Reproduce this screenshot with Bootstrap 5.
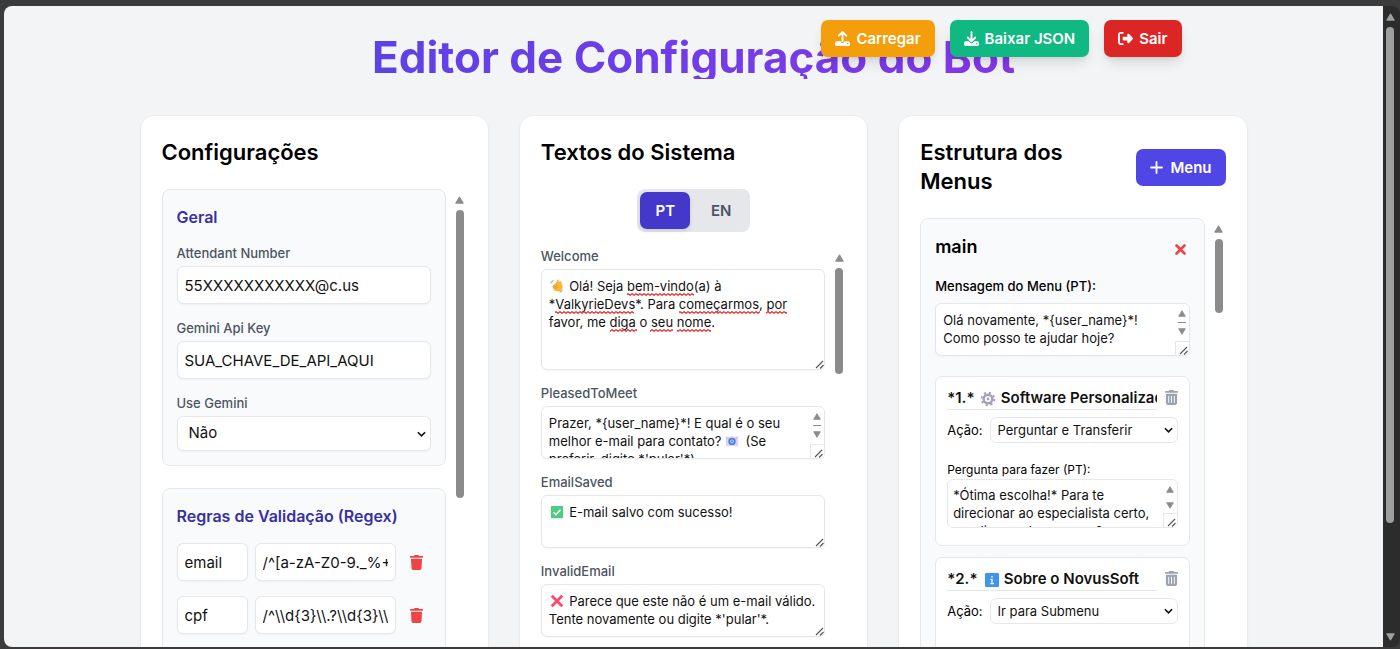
<!DOCTYPE html>
<html lang="pt-BR">
<head>
<meta charset="utf-8">
<meta name="viewport" content="width=device-width, initial-scale=1">
<title>Editor de Configuração do Bot</title>
<link href="https://cdn.jsdelivr.net/npm/bootstrap@5.3.0/dist/css/bootstrap.min.css" rel="stylesheet">
<style>
  body { font-family: Inter, "Liberation Sans", sans-serif; font-size: 13px; line-height: 18px; color: #000; background: #3b3b3b; }
  .shell { height: 100vh; padding: 6px 0 2px 4px; }
  .page { background: #f3f4f6; border-radius: 8px 0 0 8px; overflow: hidden; padding: 0 20px; }
  .wrap { max-width: 1108px; margin: 0 auto; }
  .page-title { font-size: 44px; line-height: 44px; font-weight: 700; margin: 0; padding: 0; background: linear-gradient(to right, #4f46e5, #9333ea); -webkit-background-clip: text; background-clip: text; color: transparent; }
  .hero { padding: 29px 0 36px; }
  .actions { top: 14px; right: 66px; gap: 15px; }
  .app-btn { font-size: 15px; line-height: 23px; font-weight: 600; color: #fff; border: 0; border-radius: 7px; padding: 7px 14px; display: inline-flex; align-items: center; gap: 7px; white-space: nowrap; }
  .app-btn:hover { color: #fff; filter: brightness(.95); }
  .actions .app-btn { gap: 6px; box-shadow: 0 8px 14px -3px rgba(0,0,0,.12), 0 3px 6px -3px rgba(0,0,0,.12); }
  .c-load { background: #f59e0b; } .c-save { background: #10b981; } .c-exit { background: #dc2626; } .c-menu { background: #4f46e5; }
  .cols { display: grid; grid-template-columns: repeat(3, minmax(0, 1fr)); gap: 30px; }
  .pane { background: #fff; border: 1px solid #e9ebee; border-radius: 14px; padding: 22px 21px; min-height: 600px; box-shadow: 0 1px 2px rgba(0,0,0,.03); }
  .pane-title { font-size: 22px; line-height: 29px; font-weight: 600; margin: 0; }
  .pane-head { margin-bottom: 22px; }
  .scroller { display: flex; gap: 7px; }
  .scroller > .body-col { flex: 1; min-width: 0; }
  .group-box { background: #f9fafb; border: 1px solid #e5e7eb; border-radius: 8px; padding: 14px; margin-bottom: 22px; }
  .group-title { font-size: 16px; line-height: 27px; font-weight: 600; color: #3730a3; margin: 0 0 13px; }
  .field { margin-bottom: 14px; }
  .group-box .field { margin-bottom: 15px; }
  .group-box .field:last-child { margin-bottom: 0; }
  .field > label { display: block; font-weight: 500; color: #4b5563; margin-bottom: 4px; }
  .form-control, .form-select { border: 1px solid #e5e7eb; border-radius: 6px; color: #111; background-color: #fff; box-shadow: 0 1px 2px rgba(0,0,0,.04); }
  input.form-control { height: 38px; font-size: 15px; line-height: 22px; padding: 7px; }
  .form-select { height: 35px; font-size: 15px; line-height: 22px; padding: 5px 20px 7px 11px; background-image: url("data:image/svg+xml,%3Csvg xmlns='http://www.w3.org/2000/svg' viewBox='0 0 10 6'%3E%3Cpath d='M1 1l4 4 4-4' fill='none' stroke='%23111' stroke-width='1.8'/%3E%3C/svg%3E"); background-size: 9px 6px; background-position: right 4px center; }
  textarea.form-control { font-size: 13px; line-height: 18px; padding: 7px; height: 53px; min-height: 0; resize: none; overflow: hidden; display: block; }
  textarea.tall { height: 101px; }
  .rule { display: grid; grid-template-columns: 71px minmax(0,1fr) 28px; gap: 7px; margin-bottom: 15px; }
  .icon-btn { border: 0; background: none; padding: 0; color: #ef4444; display: inline-flex; align-items: center; justify-content: center; }
  /* scrollbars */
  .sbar { width: 14px; display: flex; flex-direction: column; align-items: center; padding-top: 7px; gap: 6px; color: #8b8b8b; }
  .sbar svg { display: block; width: 9px; height: 8px; flex: none; }
  .thumb { width: 8px; border-radius: 4px; background: #8b8b8b; }
  .t-config { height: 288px; } .t-text { height: 106px; } .t-menu { height: 74px; }
  .win-bar { width: 17px; background: #2c2c2c; color: #9f9f9f; padding: 7px 3px 6px 0; border-radius: 0 8px 8px 0; display: flex; flex-direction: column; align-items: center; gap: 6px; }
  .win-bar .thumb { height: 79%; background: #9f9f9f; }
  .win-bar svg { width: 9px; height: 8px; flex: none; }
  .box-wrap { position: relative; }
  .grip { position: absolute; right: 1px; bottom: 1px; width: 9px; height: 9px; pointer-events: none; }
  .mini-bar { position: absolute; right: 1px; top: 1px; bottom: 1px; width: 14px; background: #fff; color: #8b8b8b; display: flex; flex-direction: column; align-items: center; gap: 5px; padding-top: 6px; border-radius: 0 6px 6px 0; pointer-events: none; }
  .mini-bar svg { width: 8px; height: 7px; flex: none; }
  .mini-bar i { width: 8px; height: 1px; background: #8b8b8b; }
  .corner { position: absolute; right: 0; bottom: 0; width: 14px; height: 14px; border: 1px solid #e5e7eb; border-width: 1px 0 0 1px; }
  .mini-bar .grip { right: 1px; bottom: 0; width: 9px; height: 9px; }
  .emoji { position: absolute; pointer-events: none; width: 14px; height: 14px; left: 9px; top: 10px; }
  .emoji.on-line2 { left: 184px; top: 28px; }
  .squiggles { position: absolute; left: 0; top: 0; width: 100%; height: 100%; pointer-events: none; }
  /* language switch */
  .lang-row { margin-bottom: 15px; }
  .lang { background: #e5e7eb; border-radius: 8px; padding: 3px; display: inline-flex; gap: 6px; }
  .lang button { border: 0; background: none; border-radius: 7px; font-size: 15px; line-height: 23px; font-weight: 600; padding: 7px 15px; color: #4b5563; }
  .lang button.on { background: #4338ca; color: #fff; box-shadow: 0 2px 4px rgba(0,0,0,.12); }
  /* menus */
  .menu-name { font-size: 18px; line-height: 28px; font-weight: 600; margin: 0; }
  .menu-top .icon-btn { padding-top: 4px; }
  .msg-label { display: block; font-weight: 500; margin: 16px 0 8px; }
  .msg-box { margin-bottom: 20px; }
  .option { background: #fff; border: 1px solid #e5e7eb; border-radius: 7px; padding: 7px 11px 17px; margin-bottom: 11px; }
  input.opt-title { border: 0; border-bottom: 1px solid #e5e7eb; border-radius: 0; box-shadow: none; padding: 3px 0 1px; height: 26px; font-weight: 600; }
  .opt-title-row .icon-btn { color: #9ca3af; width: 13px; }
  .opt-title-row .emoji { left: 33px; top: 7px; width: 16px; height: 16px; }
  .opt-title-row .emoji.info { left: 37px; }
  .action-row { gap: 7px; margin: 7px 0 18px; }
  .action-row .form-select { height: 26px; font-size: 13px; line-height: 18px; padding: 3px 20px 3px 7px; box-shadow: none; }
  .q-label { display: block; font-size: 12px; line-height: 18px; }
  textarea.short { height: 49px; padding: 6px 5px; box-shadow: none; }
</style>
</head>
<body>
<svg width="0" height="0" class="position-absolute" aria-hidden="true">
  <defs>
    <symbol id="up" viewBox="0 0 9 8"><path d="M4.500 .8 8.300 7.200H.7z" fill="currentColor" stroke="currentColor" stroke-linejoin="round"/></symbol>
    <symbol id="down" viewBox="0 0 9 8"><path d="M4.500 7.200 8.300 .8H.7z" fill="currentColor" stroke="currentColor" stroke-linejoin="round"/></symbol>
    <symbol id="resize" viewBox="0 0 9 9"><path d="M1 8 8 1M5 8.500 8.500 5" stroke="#555" stroke-width="1.100" fill="none"/></symbol>
    <symbol id="trash" viewBox="0 0 448 512"><path fill="currentColor" d="M432 32H312l-9.4-18.7A24 24 0 0 0 281.100 0H166.800a23.720 23.720 0 0 0-21.400 13.300L136 32H16A16 16 0 0 0 0 48v32a16 16 0 0 0 16 16h416a16 16 0 0 0 16-16V48a16 16 0 0 0-16-16zM53.200 467a48 48 0 0 0 47.900 45h245.800a48 48 0 0 0 47.900-45L416 128H32z"/></symbol>
    <symbol id="trash-can" viewBox="0 0 448 512"><path fill="currentColor" d="M135.2 17.7C140.6 6.8 151.7 0 163.8 0H284.2c12.1 0 23.2 6.8 28.6 17.7L320 32h96c17.7 0 32 14.3 32 32s-14.3 32-32 32H32C14.3 96 0 81.7 0 64S14.3 32 32 32h96l7.2-14.3zM32 128H416V448c0 35.3-28.7 64-64 64H96c-35.3 0-64-28.7-64-64V128zm96 64c-8.8 0-16 7.2-16 16V432c0 8.8 7.2 16 16 16s16-7.2 16-16V208c0-8.8-7.2-16-16-16zm96 0c-8.8 0-16 7.2-16 16V432c0 8.8 7.2 16 16 16s16-7.2 16-16V208c0-8.8-7.2-16-16-16zm96 0c-8.8 0-16 7.2-16 16V432c0 8.8 7.2 16 16 16s16-7.2 16-16V208c0-8.8-7.2-16-16-16z"/></symbol>
    <pattern id="wave" width="4" height="3" patternUnits="userSpaceOnUse"><path d="M-1 0 1 2.200 3 .4 5 2.200" transform="translate(0 .2)" fill="none" stroke="#e22" stroke-width="1.100"/></pattern>
  </defs>
</svg>
<div class="shell d-flex">
  <main class="page flex-grow-1">
    <div class="wrap position-relative">
      <header class="hero text-center">
        <h1 class="page-title">Editor de Configuração do Bot</h1>
        <div class="actions position-absolute d-flex">
          <button type="button" class="btn app-btn c-load"><svg width="15" height="15" viewBox="0 0 512 512" fill="currentColor" aria-hidden="true"><path d="M288 109.3V352c0 17.7-14.3 32-32 32s-32-14.3-32-32V109.3l-73.4 73.4c-12.5 12.5-32.8 12.5-45.3 0s-12.5-32.8 0-45.3l128-128c12.5-12.5 32.8-12.5 45.3 0l128 128c12.5 12.5 12.5 32.8 0 45.3s-32.8 12.5-45.3 0L288 109.3zM64 352H192c0 35.3 28.7 64 64 64s64-28.7 64-64H448c35.3 0 64 28.7 64 64v32c0 35.3-28.7 64-64 64H64c-35.3 0-64-28.7-64-64V416c0-35.3 28.7-64 64-64zM432 456a24 24 0 1 0 0-48 24 24 0 1 0 0 48z"/></svg>Carregar</button>
          <button type="button" class="btn app-btn c-save"><svg width="15" height="15" viewBox="0 0 512 512" fill="currentColor" aria-hidden="true"><path d="M288 32c0-17.7-14.3-32-32-32s-32 14.3-32 32V274.7l-73.4-73.4c-12.5-12.5-32.8-12.5-45.3 0s-12.5 32.8 0 45.3l128 128c12.5 12.5 32.8 12.5 45.3 0l128-128c12.5-12.5 12.5-32.8 0-45.3s-32.8-12.5-45.3 0L288 274.7V32zM64 352c-35.3 0-64 28.7-64 64v32c0 35.3 28.7 64 64 64H448c35.3 0 64-28.7 64-64V416c0-35.3-28.7-64-64-64H346.5l-45.3 45.3c-25 25-65.5 25-90.5 0L165.5 352H64zm368 56a24 24 0 1 1 0 48 24 24 0 1 1 0-48z"/></svg>Baixar JSON</button>
          <button type="button" class="btn app-btn c-exit"><svg width="15" height="15" viewBox="0 0 512 512" fill="currentColor" aria-hidden="true"><path d="M377.9 105.9L500.7 228.7c7.2 7.2 11.3 17.1 11.3 27.3s-4.1 20.1-11.3 27.3L377.9 406.1c-6.4 6.4-15 9.9-24 9.900c-18.7 0-33.900-15.200-33.900-33.900l0-62.100-128 0c-17.700 0-32-14.300-32-32l0-64c0-17.700 14.300-32 32-32l128 0 0-62.100c0-18.700 15.200-33.900 33.900-33.900c9 0 17.600 3.600 24 9.900zM160 96L96 96c-17.700 0-32 14.300-32 32l0 256c0 17.700 14.300 32 32 32l64 0c17.700 0 32 14.300 32 32s-14.300 32-32 32l-64 0c-53 0-96-43-96-96L0 128C0 75 43 32 96 32l64 0c17.700 0 32 14.300 32 32s-14.300 32-32 32z"/></svg>Sair</button>
        </div>
      </header>

      <div class="cols">
        <section class="pane">
          <div class="pane-head"><h2 class="pane-title">Configurações</h2></div>
          <div class="scroller">
            <div class="body-col">
              <div class="group-box">
                <h3 class="group-title">Geral</h3>
                <div class="field"><label for="attendant">Attendant Number</label><input id="attendant" type="text" class="form-control" value="55XXXXXXXXXXX@c.us"></div>
                <div class="field"><label for="apikey">Gemini Api Key</label><input id="apikey" type="text" class="form-control" value="SUA_CHAVE_DE_API_AQUI"></div>
                <div class="field"><label for="gemini">Use Gemini</label><select id="gemini" class="form-select"><option>Não</option><option>Sim</option></select></div>
              </div>
              <div class="group-box">
                <h3 class="group-title">Regras de Validação (Regex)</h3>
                <div class="rule"><input type="text" class="form-control" aria-label="Nome da regra" value="email"><input type="text" class="form-control" aria-label="Regex email" value="/^[a-zA-Z0-9._%+"><button type="button" class="icon-btn" aria-label="Remover email"><svg width="13" height="15"><use href="#trash"/></svg></button></div>
                <div class="rule"><input type="text" class="form-control" aria-label="Nome da regra" value="cpf"><input type="text" class="form-control" aria-label="Regex cpf" value="/^\\d{3}\\.?\\d{3}\\"><button type="button" class="icon-btn" aria-label="Remover cpf"><svg width="13" height="15"><use href="#trash"/></svg></button></div>
              </div>
            </div>
            <div class="sbar" aria-hidden="true"><svg><use href="#up"/></svg><div class="thumb t-config"></div></div>
          </div>
        </section>

        <section class="pane">
          <div class="pane-head"><h2 class="pane-title">Textos do Sistema</h2></div>
          <div class="lang-row d-flex justify-content-center"><div class="lang"><button type="button" class="on">PT</button><button type="button">EN</button></div></div>
          <div class="scroller">
            <div class="body-col">
              <div class="field"><label for="welcome">Welcome</label>
                <div class="box-wrap"><textarea id="welcome" class="form-control tall" spellcheck="false">&emsp;&nbsp; Olá! Seja bem-vindo(a) à
*ValkyrieDevs*. Para começarmos, por favor, me diga o seu nome.</textarea>
                  <svg class="emoji" viewBox="0 0 16 16" aria-hidden="true"><path d="M1 4.500 3.500 2M11.500 15l2.500-2" stroke="#7fb4d8" stroke-width="1.300" fill="none" stroke-linecap="round"/><path d="M3 8.500 7 5l1-3.500c.5-1.500 2-1 2 .2l-.3 1.800 1.700-1c1-.5 1.700.3 1.500 1.200l.7 2.300c1.500 3 .8 8-3.600 8.200C6 14.500 3.500 11 3 8.500z" fill="#fbb733"/><path d="M3 8.500 7.500 4.500M3.800 10.500 8 7M5 12.500 9 9" stroke="#e08b1d" stroke-width=".9"/></svg>
                  <svg class="squiggles" aria-hidden="true"><g fill="url(#wave)"><rect x="86" y="24" width="67" height="3"/><rect x="14" y="42" width="79" height="3"/><rect x="138" y="42" width="81" height="3"/><rect x="225" y="42" width="21" height="3"/><rect x="69" y="60" width="27" height="3"/><rect x="109" y="60" width="23" height="3"/><rect x="136" y="60" width="34" height="3"/></g></svg>
                  <svg class="grip"><use href="#resize"/></svg></div></div>
              <div class="field"><label for="pleased">PleasedToMeet</label>
                <div class="box-wrap"><textarea id="pleased" class="form-control" spellcheck="false">Prazer, *{user_name}*! E qual é o seu
melhor e-mail para contato? &emsp;&nbsp; (Se
preferir, digite *'pular'*)</textarea>
                  <svg class="emoji on-line2" viewBox="0 0 16 16" aria-hidden="true"><rect x="1" y="3" width="14" height="11" fill="#d9d5ee"/><path d="M1 3l5 5M15 3l-5 5" stroke="#e6a9cd"/><circle cx="8" cy="8.500" r="4.200" fill="#4c7fe0"/><circle cx="8" cy="8.500" r="1.700" fill="none" stroke="#cfe0ff"/></svg>
                  <div class="mini-bar"><svg><use href="#up"/></svg><i></i><svg><use href="#down"/></svg><div class="corner"><svg class="grip"><use href="#resize"/></svg></div></div></div></div>
              <div class="field"><label for="saved">EmailSaved</label>
                <div class="box-wrap"><textarea id="saved" class="form-control" spellcheck="false">&emsp;&nbsp; E-mail salvo com sucesso!</textarea>
                  <svg class="emoji" viewBox="0 0 16 16" aria-hidden="true"><rect x="1" y="1" width="14" height="14" rx="1" fill="#4fcb83"/><path d="M4 8.200l2.800 2.800L12 5.500" stroke="#fff" stroke-width="1.600" fill="none"/></svg>
                  <svg class="grip"><use href="#resize"/></svg></div></div>
              <div class="field"><label for="invalid">InvalidEmail</label>
                <div class="box-wrap"><textarea id="invalid" class="form-control" spellcheck="false">&emsp;&nbsp; Parece que este não é um e-mail válido. Tente novamente ou digite *'pular'*.</textarea>
                  <svg class="emoji" viewBox="0 0 16 16" aria-hidden="true"><path d="M2 2l12 12M14 2 2 14" stroke="#f8486b" stroke-width="3.200"/></svg>
                  <svg class="grip"><use href="#resize"/></svg></div></div>
            </div>
            <div class="sbar" aria-hidden="true"><svg><use href="#up"/></svg><div class="thumb t-text"></div></div>
          </div>
        </section>

        <section class="pane">
          <div class="pane-head d-flex justify-content-between align-items-center"><h2 class="pane-title">Estrutura dos Menus</h2>
            <button type="button" class="btn app-btn c-menu"><svg width="13" height="13" viewBox="0 0 13 13" aria-hidden="true"><path d="M6.500 1v11M1 6.500h11" stroke="#fff" stroke-width="1.800" stroke-linecap="round"/></svg>Menu</button></div>
          <div class="scroller">
            <div class="body-col">
              <div class="group-box">
                <div class="menu-top d-flex justify-content-between align-items-center"><h3 class="menu-name">main</h3><button type="button" class="icon-btn me-1" aria-label="Remover menu"><svg width="11" height="11" viewBox="0 0 11 11"><path d="M1.500 1.500l8 8M9.500 1.500l-8 8" stroke="currentColor" stroke-width="2.600" stroke-linecap="round"/></svg></button></div>
                <label class="msg-label" for="mainmsg">Mensagem do Menu (PT):</label>
                <div class="box-wrap msg-box"><textarea id="mainmsg" class="form-control" spellcheck="false">Olá novamente, *{user_name}*!
Como posso te ajudar hoje?</textarea>
                  <div class="mini-bar"><svg><use href="#up"/></svg><i></i><svg><use href="#down"/></svg><div class="corner"><svg class="grip"><use href="#resize"/></svg></div></div></div>
                <div class="option">
                  <div class="opt-title-row d-flex align-items-center position-relative gap-2"><input type="text" class="form-control opt-title" aria-label="Opção 1" value="*1.* &emsp;&nbsp; Software Personalizado">
                    <svg class="emoji" viewBox="0 0 16 16" aria-hidden="true"><circle cx="8" cy="8" r="4.300" fill="none" stroke="#a79fba" stroke-width="2.400"/><circle cx="8" cy="8" r="6.300" fill="none" stroke="#a79fba" stroke-width="2" stroke-dasharray="2.200 2.750"/><circle cx="8" cy="8" r="1.400" fill="#a79fba"/></svg>
                    <button type="button" class="icon-btn" aria-label="Remover opção"><svg width="13" height="15"><use href="#trash-can"/></svg></button></div>
                  <div class="action-row d-flex align-items-center"><label for="act1">Ação:</label><select id="act1" class="form-select"><option>Perguntar e Transferir</option></select></div>
                  <label class="q-label" for="ask1">Pergunta para fazer (PT):</label>
                  <div class="box-wrap"><textarea id="ask1" class="form-control short" spellcheck="false">*Ótima escolha!* Para te
direcionar ao especialista certo,
me diga qual seu nome?</textarea>
                    <div class="mini-bar"><svg><use href="#up"/></svg><svg class="mt-1"><use href="#down"/></svg><div class="corner"><svg class="grip"><use href="#resize"/></svg></div></div></div>
                </div>
                <div class="option">
                  <div class="opt-title-row d-flex align-items-center position-relative gap-2"><input type="text" class="form-control opt-title" aria-label="Opção 2" value="*2.* &emsp;&nbsp; Sobre o NovusSoft">
                    <svg class="emoji info" viewBox="0 0 16 16" aria-hidden="true"><rect x="1" y="1" width="14" height="14" rx="1" fill="#3f95ee"/><path d="M8 4v1.600M6.500 7.500H8v4M6.300 11.700h3.600" stroke="#fff" stroke-width="1.300" fill="none"/></svg>
                    <button type="button" class="icon-btn" aria-label="Remover opção"><svg width="13" height="15"><use href="#trash-can"/></svg></button></div>
                  <div class="action-row d-flex align-items-center"><label for="act2">Ação:</label><select id="act2" class="form-select"><option>Ir para Submenu</option></select></div>
                </div>
              </div>
            </div>
            <div class="sbar" aria-hidden="true"><svg><use href="#up"/></svg><div class="thumb t-menu"></div></div>
          </div>
        </section>
      </div>
    </div>
  </main>
  <div class="win-bar" aria-hidden="true"><svg><use href="#up"/></svg><div class="thumb"></div><svg class="mt-auto"><use href="#down"/></svg></div>
</div>
<script src="https://cdn.jsdelivr.net/npm/bootstrap@5.3.0/dist/js/bootstrap.bundle.min.js"></script>
</body>
</html>
